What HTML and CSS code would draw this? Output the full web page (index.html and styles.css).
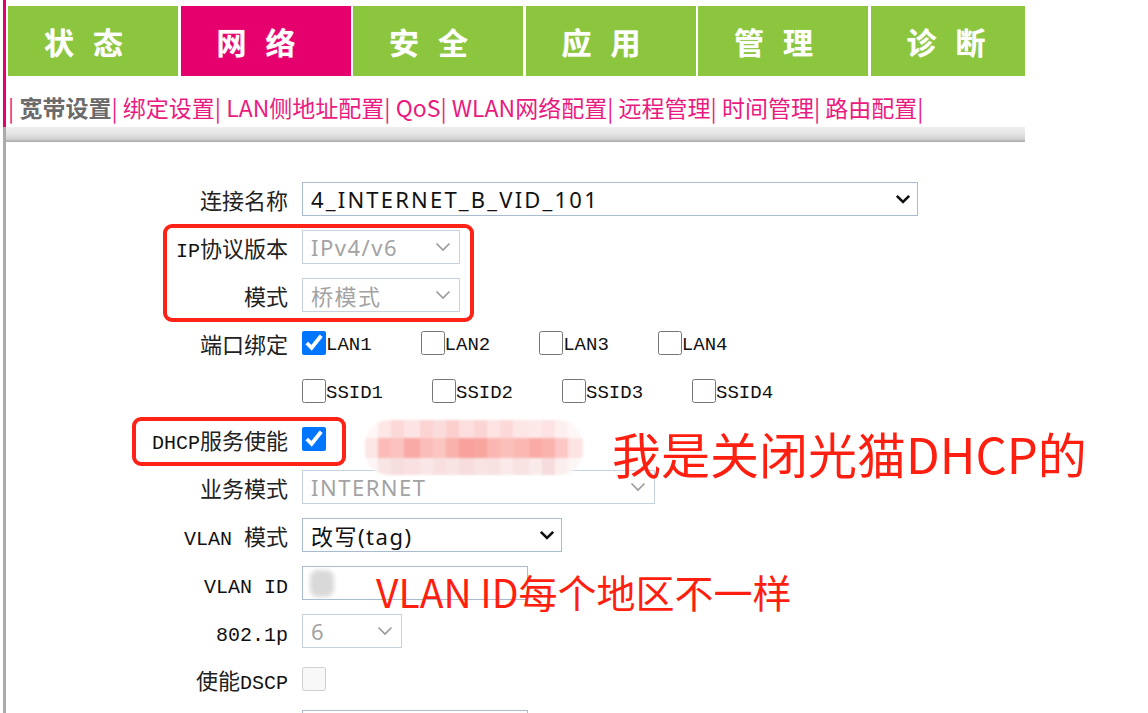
FILE: index.html
```html
<!DOCTYPE html>
<html lang="zh-CN">
<head>
<meta charset="utf-8">
<title>网络 - 宽带设置</title>
<link rel="stylesheet" href="styles.css">
</head>
<body>
<div class="page">
  <header class="top">
    <nav class="tabs">
      <a class="tab">状态</a>
      <a class="tab active">网络</a>
      <a class="tab">安全</a>
      <a class="tab">应用</a>
      <a class="tab">管理</a>
      <a class="tab">诊断</a>
    </nav>
    <div class="subnav">| <a class="cur">宽带设置</a>| <a>绑定设置</a>| <a>LAN侧地址配置</a>| <a>QoS</a>| <a>WLAN网络配置</a>| <a>远程管理</a>| <a>时间管理</a>| <a>路由配置</a>|</div>
  </header>

  <div class="body-wrap">
    <div class="bar"></div>
    <main class="form">
      <label class="lbl">连接名称</label>
      <div class="ctl">
        <div class="sel w616 wide-text"><span>4_INTERNET_B_VID_101</span><svg class="chev" viewBox="0 0 16 10"><path d="M1.8 1.8 L8 8 L14.2 1.8"/></svg></div>
      </div>

      <label class="lbl"><span class="en">IP</span>协议版本</label>
      <div class="ctl">
        <div class="sel dis w158"><span>IPv4/v6</span><svg class="chev" viewBox="0 0 16 10"><path d="M1.5 1.5 L8 8 L14.5 1.5"/></svg></div>
      </div>

      <label class="lbl">模式</label>
      <div class="ctl">
        <div class="sel dis w158"><span>桥模式</span><svg class="chev" viewBox="0 0 16 10"><path d="M1.5 1.5 L8 8 L14.5 1.5"/></svg></div>
      </div>

      <label class="lbl">端口绑定</label>
      <div class="ctl opts">
        <label class="opt"><input type="checkbox" class="cb" checked><span>LAN1</span></label>
        <label class="opt"><input type="checkbox" class="cb"><span>LAN2</span></label>
        <label class="opt"><input type="checkbox" class="cb"><span>LAN3</span></label>
        <label class="opt"><input type="checkbox" class="cb"><span>LAN4</span></label>
      </div>

      <span class="lbl"></span>
      <div class="ctl opts">
        <label class="opt"><input type="checkbox" class="cb"><span>SSID1</span></label>
        <label class="opt"><input type="checkbox" class="cb"><span>SSID2</span></label>
        <label class="opt"><input type="checkbox" class="cb"><span>SSID3</span></label>
        <label class="opt"><input type="checkbox" class="cb"><span>SSID4</span></label>
      </div>

      <label class="lbl"><span class="en">DHCP</span>服务使能</label>
      <div class="ctl"><input type="checkbox" class="cb" checked></div>

      <label class="lbl">业务模式</label>
      <div class="ctl">
        <div class="sel dis w353"><span>INTERNET</span><svg class="chev" viewBox="0 0 16 10"><path d="M1.5 1.5 L8 8 L14.5 1.5"/></svg></div>
      </div>

      <label class="lbl"><span class="en">VLAN </span>模式</label>
      <div class="ctl">
        <div class="sel w260"><span>改写(tag)</span><svg class="chev" viewBox="0 0 16 10"><path d="M1.8 1.8 L8 8 L14.2 1.8"/></svg></div>
      </div>

      <label class="lbl"><span class="en">VLAN ID</span></label>
      <div class="ctl"><input type="text" class="inp"></div>

      <label class="lbl"><span class="en">802.1p</span></label>
      <div class="ctl">
        <div class="sel dis w100"><span>6</span><svg class="chev" viewBox="0 0 16 10"><path d="M1.5 1.5 L8 8 L14.5 1.5"/></svg></div>
      </div>

      <label class="lbl">使能<span class="en">DSCP</span></label>
      <div class="ctl"><input type="checkbox" class="cb" disabled></div>

      <span class="lbl"></span>
      <div class="ctl"><input type="text" class="inp"></div>
    </main>
  </div>

  <div class="hl hl-proto"></div>
  <div class="hl hl-dhcp"></div>
  <div class="mosaic">
    <div class="m1"></div>
    <div class="m2"></div>
    <div class="m3"></div>
  </div>
  <div class="blot"></div>
  <div class="note note-dhcp">我是关闭光猫DHCP的</div>
  <div class="note note-vlan">VLAN ID每个地区不一样</div>
</div>
</body>
</html>
```

FILE: styles.css
```css
* { box-sizing: border-box; }

html, body {
  margin: 0;
  padding: 0;
  background: #fff;
}

body {
  font-family: "Noto Sans", "Noto Sans CJK SC", sans-serif;
  color: #222;
}

.page {
  position: relative;
  width: 1148px;
  height: 713px;
  overflow: hidden;
}

/* ---------- header ---------- */
.top {
  width: 1022px;
  margin-left: 3px;
  border-left: 3px solid #e5006d;
  padding: 6px 0 0 2px;
  height: 127px;
}

.tabs {
  display: flex;
  gap: 2.5px;
  height: 70px;
  overflow: hidden;
}

.tab {
  flex: none;
  width: 170px;
  height: 70px;
  background: #8cc63f;
  color: #fff;
  display: flex;
  align-items: center;
  justify-content: center;
  font-family: "Noto Sans CJK SC", sans-serif;
  font-weight: 700;
  font-size: 30px;
  letter-spacing: 19px;
  text-shadow: 0 0 1px rgba(255,255,255,0.6);
}

.tab.active { background: #e6006e; }

.subnav {
  height: 51px;
  padding-top: 11px;
  line-height: 40px;
  font-family: "Noto Sans CJK SC", sans-serif;
  font-size: 23px;
  color: #ea1a80;
  white-space: nowrap;
}

.subnav a { color: #ea1a80; }
.subnav a.cur { color: #6b6b6b; font-weight: 700; }

/* ---------- body ---------- */
.body-wrap {
  width: 1022px;
  margin-left: 3px;
  border-left: 3px solid #ababab;
  height: 586px;
}

.bar {
  height: 15px;
  background: linear-gradient(#efefef 0%, #e4e4e4 45%, #d2d2d2 80%, #a8a8a8 100%);
}

.form {
  display: grid;
  grid-template-columns: 282px 1fr;
  column-gap: 14px;
  grid-auto-rows: 48px;
  align-items: center;
  padding-top: 33px;
}

.lbl {
  justify-self: end;
  font-family: "Noto Sans CJK SC", sans-serif;
  font-size: 22px;
  color: #222;
  white-space: pre;
}

.en {
  font-family: "Liberation Mono", monospace;
  font-size: 20px;
  color: #111;
}

.ctl {
  display: flex;
  align-items: center;
}

/* fake select */
.sel {
  height: 34px;
  border: 1px solid #a8bbcf;
  background: #fff;
  display: flex;
  align-items: center;
  justify-content: space-between;
  padding: 0 6px 0 8px;
  font-family: "Noto Sans", "Noto Sans CJK SC", sans-serif;
  font-size: 22px;
  letter-spacing: 1.5px;
  color: #111;
}

.sel.wide-text { letter-spacing: 2.2px; }

.sel.dis {
  border-color: #c6d3df;
  color: #a3a3a3;
  padding-right: 8px;
}

.chev {
  width: 16px;
  height: 10px;
  fill: none;
  stroke: #111;
  stroke-width: 2.6;
}

.dis .chev {
  stroke: #9a9a9a;
  stroke-width: 1.6;
}

.w616 { width: 616px; }
.w158 { width: 158px; }
.w353 { width: 353px; }
.w260 { width: 260px; }
.w100 { width: 100px; }

.inp {
  width: 226px;
  height: 34px;
  margin: 0;
  border: 1px solid #a8bbcf;
  background: #fff;
}

.cb {
  width: 24px;
  height: 24px;
  margin: 0;
  flex: none;
}

.opts { gap: 49px; }

.opt {
  display: flex;
  align-items: center;
  font-family: "Liberation Mono", monospace;
  font-size: 19px;
  color: #111;
}

.opt span { padding-top: 4px; }

/* ---------- annotations ---------- */
.hl {
  position: absolute;
  border: 4px solid #ff2216;
  border-radius: 9px;
}

.hl-proto { left: 163px; top: 224px; width: 311px; height: 98px; }
.hl-dhcp { left: 132px; top: 417px; width: 214px; height: 49px; }

.mosaic {
  position: absolute;
  left: 365px;
  top: 420px;
  width: 218px;
  height: 55px;
  border-radius: 24px;
  overflow: hidden;
  display: flex;
  flex-direction: column;
  filter: blur(0.8px);
}

.m1 {
  height: 18px;
  background: linear-gradient(90deg,
    #fff6f6 0 6%, #fde6e6 6% 12%, #fcd8d8 12% 18%, #fde4e4 18% 25%,
    #fcd3d3 25% 31%, #fbdcdc 31% 37%, #fccfcf 37% 43%, #fddede 43% 50%,
    #fbd4d4 50% 56%, #fde3e3 56% 62%, #fcd9d9 62% 68%, #fde6e6 68% 75%,
    #fde9e9 75% 81%, #fde3e3 81% 87%, #fff0f0 87% 93%, #fff7f7 93% 100%);
}

.m2 {
  height: 20px;
  background: linear-gradient(90deg,
    #fce6e6 0 6%, #fbbcb8 6% 12%, #fbc3c0 12% 18%, #f9aaa6 18% 25%,
    #fbbdb9 25% 31%, #fbc5c1 31% 37%, #fab2ad 37% 43%, #f9a29d 43% 50%,
    #f9a5a0 50% 56%, #fbb6b1 56% 62%, #fbbfba 62% 68%, #fbb8b3 68% 75%,
    #faaba6 75% 81%, #fbb3ae 81% 87%, #fbc8c5 87% 93%, #fde4e4 93% 100%);
}

.m3 {
  height: 17px;
  background: linear-gradient(90deg,
    #fdf4f4 0 6%, #f9e5e5 6% 12%, #f7dede 12% 18%, #f9e1e1 18% 25%,
    #f9e7e7 25% 31%, #f8e0e0 31% 37%, #f9e4e4 37% 43%, #f7dddd 43% 50%,
    #f9e3e3 50% 56%, #f8e1e1 56% 62%, #faeaea 62% 68%, #f8e2e2 68% 75%,
    #faebeb 75% 81%, #f6dcdc 81% 87%, #fbeeee 87% 93%, #fdf6f6 93% 100%);
}

.blot {
  position: absolute;
  left: 310px;
  top: 570px;
  width: 24px;
  height: 27px;
  border-radius: 8px;
  background: #d9d9d9;
  filter: blur(2px);
}

.note {
  position: absolute;
  color: #ff1f10;
  font-family: "Noto Sans CJK SC", sans-serif;
  white-space: nowrap;
}

.note-dhcp {
  left: 612px;
  top: 426px;
  font-size: 49px;
  line-height: 54px;
}

.note-vlan {
  left: 376px;
  top: 569px;
  font-size: 39px;
  line-height: 44px;
}
```
